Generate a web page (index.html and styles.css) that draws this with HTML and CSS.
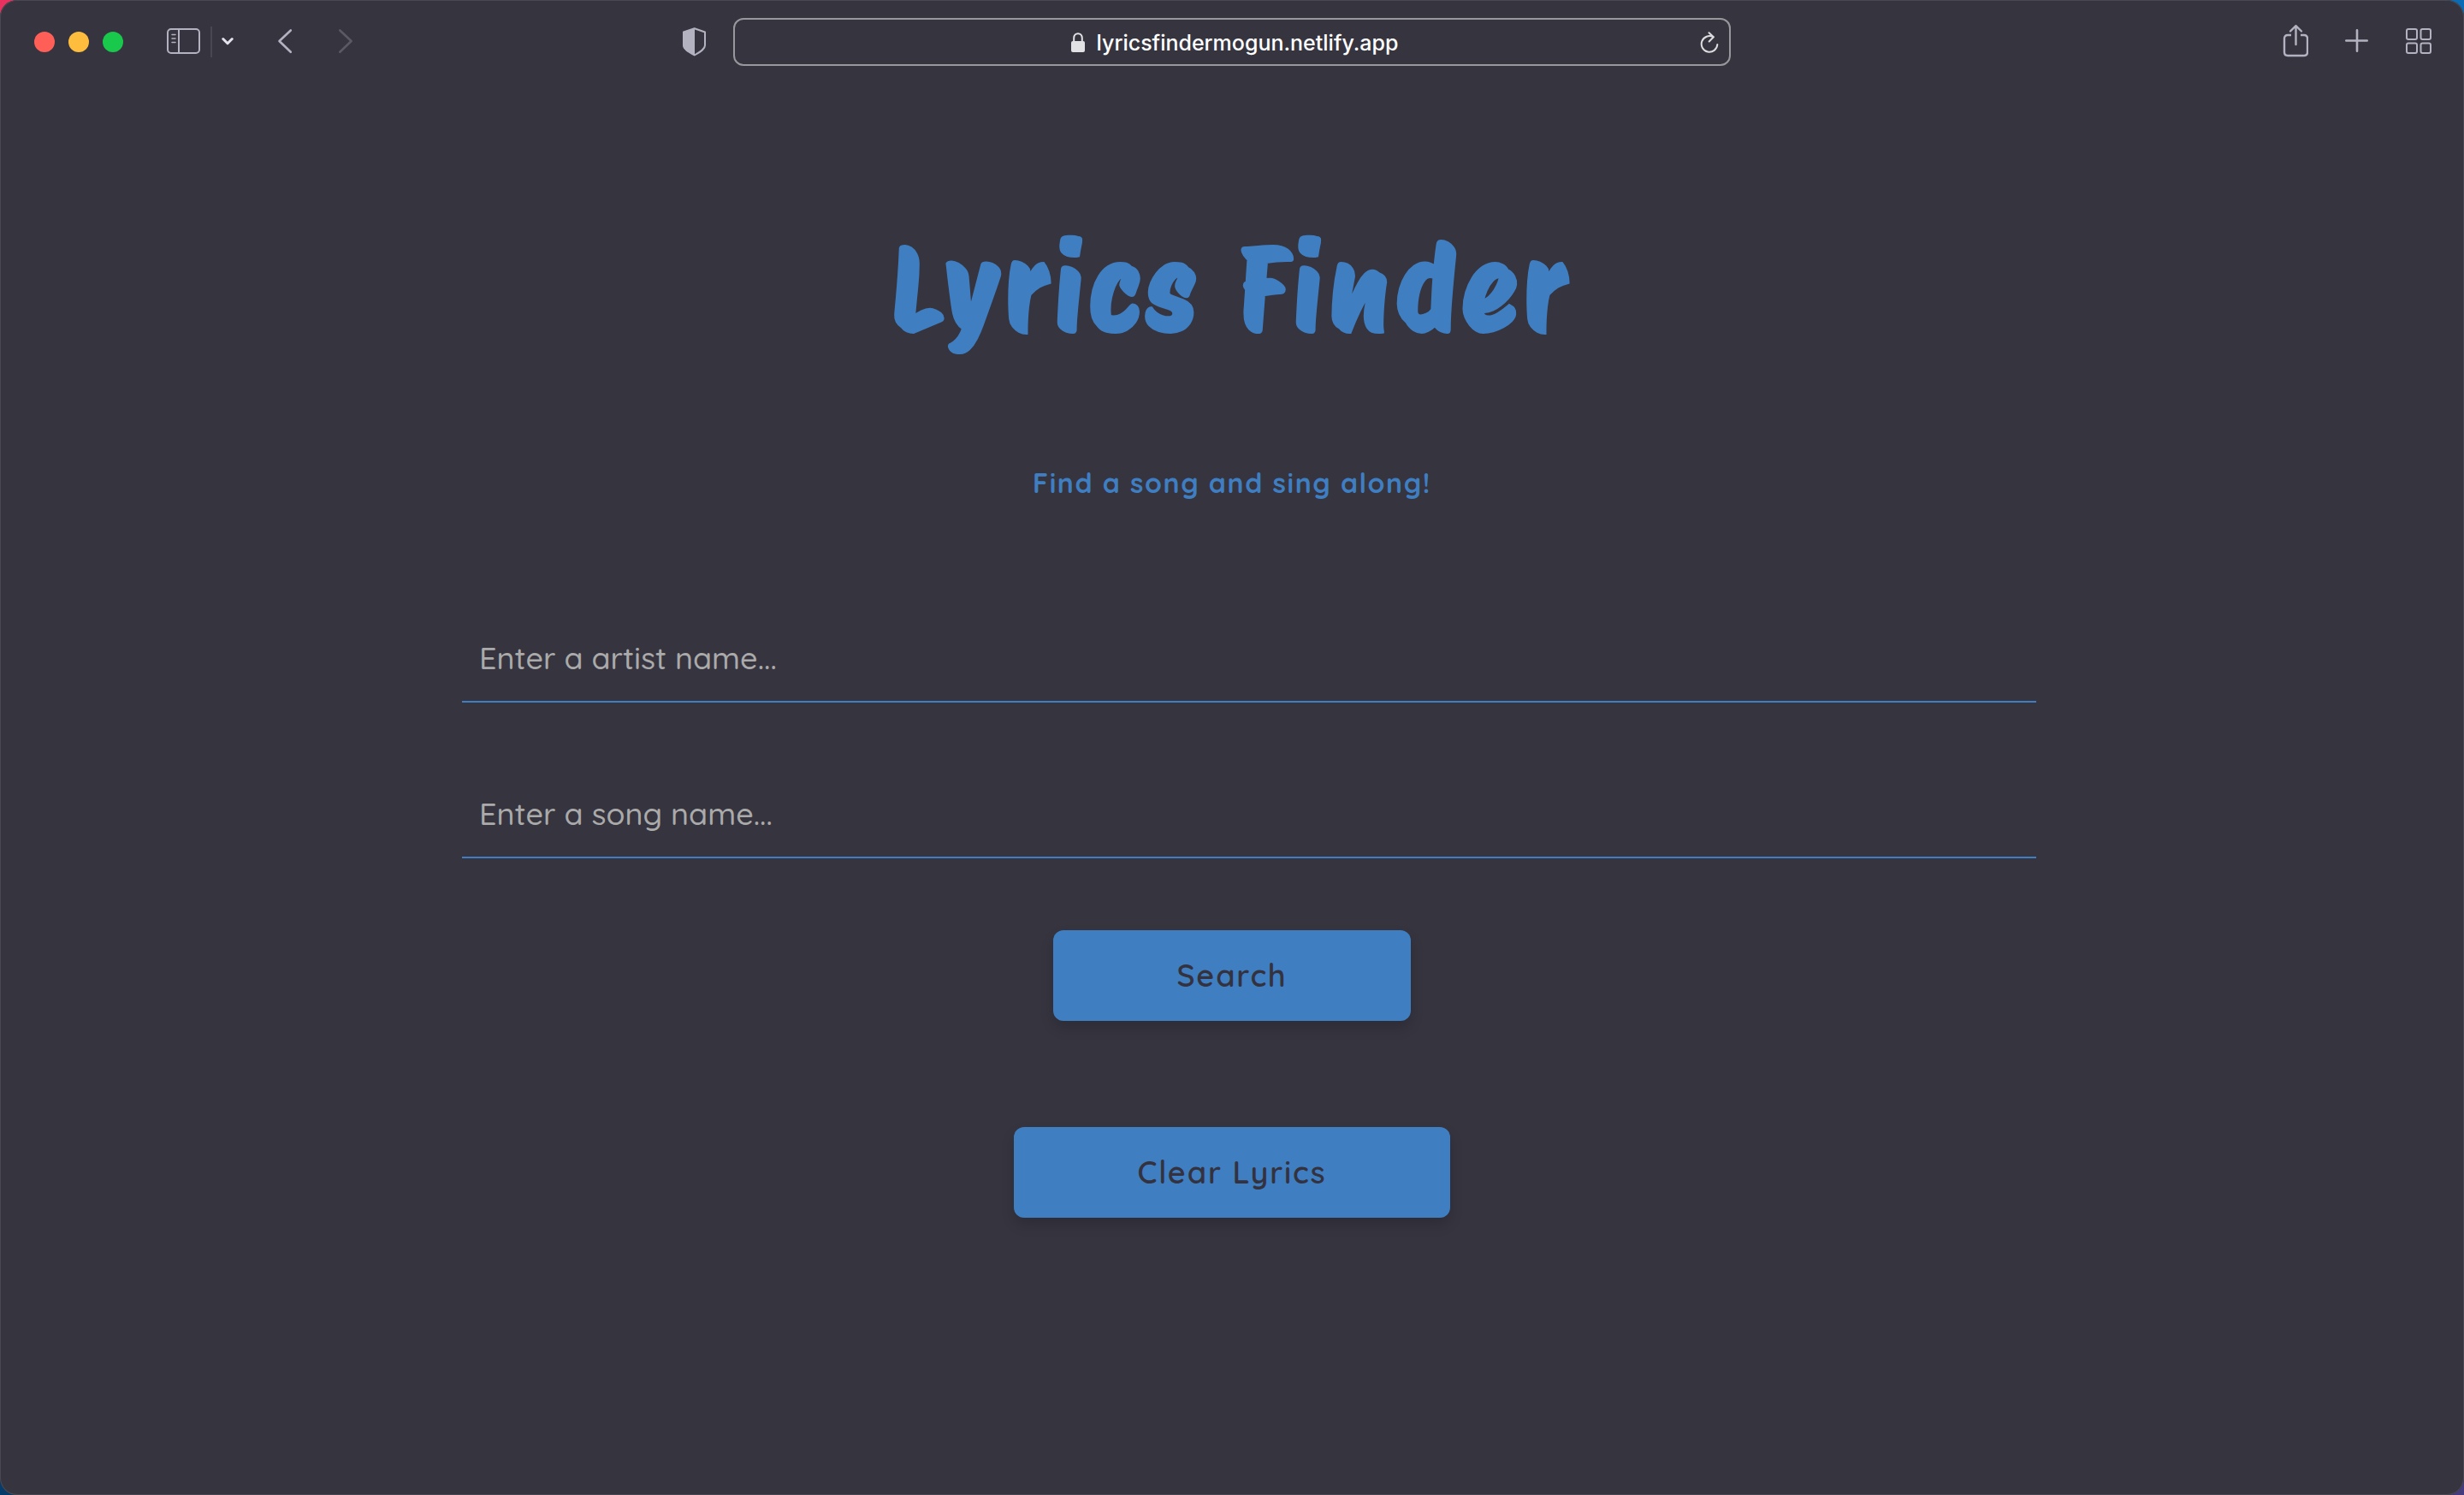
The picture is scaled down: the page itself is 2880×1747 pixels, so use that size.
FILE: index.html
```html
<!DOCTYPE html>
<html lang="en">
<head>
<meta charset="utf-8">
<meta name="viewport" content="width=device-width, initial-scale=1">
<title>Lyrics Finder</title>
<link rel="stylesheet" href="styles.css">
</head>
<body>
<div class="window">
  <header class="toolbar">
    <div class="toolbar-left">
      <div class="lights">
        <button class="light light-close" aria-label="Close"></button>
        <button class="light light-minimize" aria-label="Minimize"></button>
        <button class="light light-zoom" aria-label="Zoom"></button>
      </div>
      <div class="sidebar-tools">
        <button class="icon-button" aria-label="Show sidebar">
          <svg width="40" height="32" viewBox="0 0 40 32" fill="none" stroke="currentColor" stroke-width="2">
            <rect x="1" y="1" width="37" height="28" rx="4"/>
            <path d="M14 1v28"/>
            <path d="M6 7.500h4M6 12h4M6 16.500h4" stroke-width="1.500" stroke-linecap="round"/>
          </svg>
        </button>
        <span class="divider"></span>
        <button class="icon-button bright" aria-label="Tab groups">
          <svg width="14" height="12" viewBox="0 0 14 12" fill="none" stroke="currentColor" stroke-width="3" stroke-linecap="round" stroke-linejoin="round"><path d="M1.800 2.500 7 7.700l5.200-5.200"/></svg>
        </button>
      </div>
      <nav class="history">
        <button class="icon-button" aria-label="Back">
          <svg width="18" height="32" viewBox="0 0 18 32" fill="none" stroke="currentColor" stroke-width="2.600" stroke-linecap="round" stroke-linejoin="round"><path d="M15.800 2.500 2.500 15l13.300 12.800"/></svg>
        </button>
        <button class="icon-button dim" aria-label="Forward">
          <svg width="18" height="32" viewBox="0 0 18 32" fill="none" stroke="currentColor" stroke-width="2.600" stroke-linecap="round" stroke-linejoin="round"><path d="M2.300 2.500 15.600 15 2.300 27.800"/></svg>
        </button>
      </nav>
      <button class="icon-button shield" aria-label="Privacy report">
        <svg width="28" height="34" viewBox="0 0 28 34">
          <path d="M13.700 1.300 26 5.500V21c0 4-4 6.800-12.300 11.500C5.400 27.800 1 25 1 21V5.500Z" fill="none" stroke="currentColor" stroke-width="2" stroke-linejoin="round"/>
          <path d="M14 1v32C5 28 .2 25.500.2 21V5.200Z" fill="currentColor"/>
        </svg>
      </button>
    </div>
    <div class="address">
      <a class="address-link" href="#">
        <svg width="16" height="24" viewBox="0 0 16 24"><rect y="10" width="16" height="13" rx="2" fill="currentColor"/><path d="M3.200 11V6.500c0-7 9.600-7 9.600 0V11" fill="none" stroke="currentColor" stroke-width="2"/></svg>
        <span class="address-text">lyricsfindermogun.netlify.app</span>
      </a>
      <button class="icon-button reload" aria-label="Reload">
        <svg width="22" height="26" viewBox="0 0 22 26" fill="none" stroke="currentColor" stroke-width="2" stroke-linecap="round" stroke-linejoin="round"><path d="M15.500 6.300A9.300 9.300 0 1 0 20.300 15"/><path d="M10.500 1.200 15.800 6.300 10.700 11.500"/></svg>
      </button>
    </div>
    <div class="toolbar-right">
      <button class="icon-button" aria-label="Share">
        <svg width="30" height="42" viewBox="0 0 30 42" fill="none" stroke="currentColor" stroke-width="2.400" stroke-linecap="round" stroke-linejoin="round"><path d="M10 13H6q-4 0-4 4v16q0 4 4 4h19q4 0 4-4V17q0-4-4-4h-4" stroke-linecap="butt"/><path d="M15.500 24V2.500M9 8.500l6.500-6.300L22 8.500"/></svg>
      </button>
      <button class="icon-button" aria-label="New tab">
        <svg width="30" height="30" viewBox="0 0 30 30" fill="none" stroke="currentColor" stroke-width="2.600" stroke-linecap="round"><path d="M15 1.300v24.400M2.300 13.500h24.400"/></svg>
      </button>
      <button class="icon-button" aria-label="Tab overview">
        <svg width="30" height="32" viewBox="0 0 30 32" fill="none" stroke="currentColor" stroke-width="2"><rect x="1" y="1" width="12" height="12" rx="2"/><rect x="17.500" y="1" width="11.500" height="12" rx="2"/><rect x="1" y="17.500" width="12" height="11.500" rx="2"/><rect x="17.500" y="17.500" width="11.500" height="11.500" rx="2"/></svg>
      </button>
    </div>
  </header>
  <main class="page">
    <h1 class="title">Lyrics Finder</h1>
    <h2 class="tagline">Find a song and sing along!</h2>
    <form class="search-form">
      <input class="field" type="text" aria-label="Artist name" placeholder="Enter a artist name...">
      <input class="field" type="text" aria-label="Song name" placeholder="Enter a song name...">
      <button class="action" type="button">Search</button>
    </form>
    <button class="action" type="button">Clear Lyrics</button>
  </main>
</div>
</body>
</html>
```

FILE: styles.css
```css
:root {
  --ink: #35343f;
  --blue: #3f7ec1;
  --icon: #b3b2c0;
}

body {
  margin: 0;
  color: var(--blue);
  font-family: Quicksand, Lato, sans-serif;
  background:
    radial-gradient(circle at 0 0, #e8315f 40px, transparent 41px),
    radial-gradient(circle at 100% 0, #0a6cb4 40px, transparent 41px),
    radial-gradient(circle at 0 100%, #063c69 40px, transparent 41px),
    radial-gradient(circle at 100% 100%, #443a7c 40px, transparent 41px),
    var(--ink);
}

.window {
  display: flow-root;
  min-height: 100vh;
  border-radius: 20px;
  background: var(--ink);
  box-shadow: inset 0 0 0 1px #4a4953;
}

.toolbar {
  display: grid;
  grid-template-columns: 1fr minmax(0, 1166px) 1fr;
  align-items: center;
  height: 98px;
}

.toolbar-left,
.toolbar-right,
.lights,
.sidebar-tools,
.history,
.address,
.address-link {
  display: flex;
  align-items: center;
}

.toolbar-left { gap: 51px; padding: 0 31px 0 40px; }
.toolbar-right { justify-content: flex-end; gap: 42px; padding-right: 38px; }
.lights { gap: 16px; }
.sidebar-tools { gap: 11px; }
.history { gap: 53px; }

.light {
  width: 24px;
  height: 24px;
  padding: 0;
  border: 0;
  border-radius: 50%;
}

.light-close { background: #ff5f57; }
.light-minimize { background: #ffbd3e; }
.light-zoom { background: #18c94c; }

.icon-button {
  display: flex;
  padding: 0;
  border: 0;
  background: none;
  color: var(--icon);
}

.bright { color: #e4e3ee; }
.dim { color: #5a5964; }
.shield { margin-left: auto; }

.divider {
  width: 2px;
  height: 36px;
  background: #484752;
}

.address {
  box-sizing: border-box;
  height: 56px;
  padding: 2px 12px 0 40px;
  border: 2px solid #98979c;
  border-radius: 12px;
}

.address-link {
  flex: 1;
  justify-content: center;
  gap: 14px;
  color: #e2e2e4;
  text-decoration: none;
}

.address-text {
  color: #fff;
  font: 500 25px/32px Inter, sans-serif;
}

.reload { color: #dddde0; }

.page {
  display: flex;
  flex-direction: column;
  align-items: center;
}

.title {
  margin: 150px 0 0;
  font-family: "Protest Riot", "Caveat Brush", Lato, sans-serif;
  font-size: 134px;
  font-weight: 700;
  letter-spacing: 0.05em;
  line-height: 180px;
}

.tagline {
  margin: 116px 0 0;
  font-size: 32px;
  font-weight: 700;
  letter-spacing: 0.05em;
  line-height: 40px;
}

.search-form {
  display: flex;
  flex-direction: column;
  align-items: center;
  width: 62.5%;
  margin-top: 135px;
}

.field {
  align-self: flex-start;
  width: 100%;
  height: 60px;
  margin-bottom: 80px;
  padding: 20px;
  border: 0;
  border-bottom: 2px solid var(--blue);
  outline: 0;
  background: none;
  color: var(--blue);
  font: 500 36px/60px Quicksand, Lato, sans-serif;
}

.field::placeholder { color: #aaa; opacity: 1; }

.action {
  height: 106px;
  margin-top: 4px;
  padding: 0 144px;
  border: 0;
  border-radius: 12px;
  background: var(--blue);
  box-shadow: 0 8px 16px rgba(0, 0, 0, 0.14);
  color: #33323e;
  font: 600 36px/48px Quicksand, Lato, sans-serif;
  letter-spacing: 0.05em;
}

.page > .action { margin-top: 124px; }
```
